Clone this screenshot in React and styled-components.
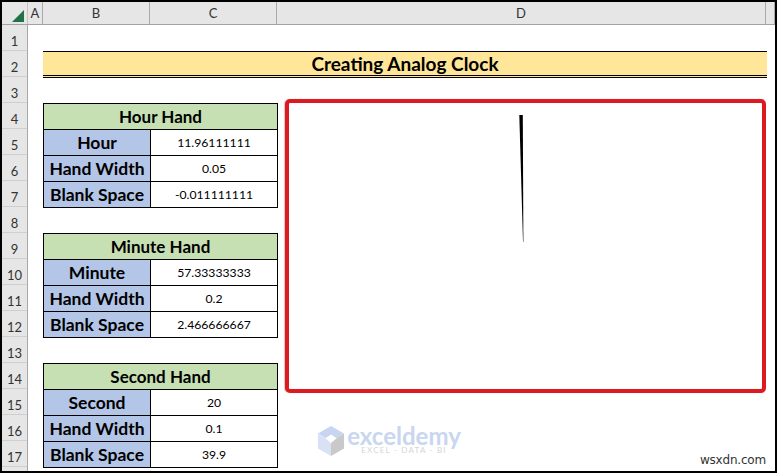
import { createGlobalStyle, styled } from "styled-components";

const GlobalStyle = createGlobalStyle`
    html, body {
        margin: 0;
        padding: 0;
        background: #fff;
    }
`;

const Frame = styled.div`
    box-sizing: border-box;
    width: 777px;
    height: 473px;
    border: 2px solid #000;
    overflow: hidden;
    background: #fff;
    font-family: Lato, "Liberation Sans", sans-serif;
    color: #000;
`;

const ColumnBar = styled.div`
    display: flex;
    height: 23px;
    background: #e6e6e6;
    border-bottom: 1px solid #a3a3a3;
    box-sizing: border-box;
`;

const Corner = styled.div`
    box-sizing: border-box;
    width: 26px;
    padding: 5px 3px 0 0;
    border-right: 1px solid #c4c4c4;
    display: flex;
    justify-content: flex-end;
    align-items: center;
`;

const ColumnLabel = styled.div`
    box-sizing: border-box;
    width: ${(p) => p.$width}px;
    border-right: 1px solid #ababab;
    text-align: center;
    font-size: 13px;
    line-height: 22px;
    color: #333;
`;

const SheetBody = styled.div`
    display: flex;
    height: 446px;
`;

const RowBar = styled.div`
    box-sizing: border-box;
    width: 26px;
    background: #e6e6e6;
    border-right: 1px solid #a8a8a8;
    flex: none;
`;

const RowLabel = styled.div`
    box-sizing: border-box;
    height: 26px;
    padding-top: 6px;
    border-bottom: 1px solid #cfcfcf;
    text-align: center;
    font-size: 13px;
    line-height: 20px;
    color: #333;
`;

const Canvas = styled.div`
    position: relative;
    flex: 1;
    padding: 26px 0 0 15px;
`;

const Title = styled.div`
    box-sizing: border-box;
    width: 724px;
    height: 27px;
    background: #ffe699;
    border-top: 1px solid #000;
    border-bottom: 3px double #000;
    text-align: center;
    font-size: 19px;
    font-weight: 700;
    line-height: 24px;
`;

const Tables = styled.div`
    display: flex;
    flex-direction: column;
    gap: 25px;
    margin-top: 25px;
`;

const Table = styled.table`
    border-collapse: collapse;
    table-layout: fixed;
    width: 235px;
    font-size: 12.2px;

    td, th {
        border: 1px solid #000;
        height: 25px;
        padding: 0;
        text-align: center;
    }
`;

const LabelColumn = styled.col`
    width: 107px;
`;

const Heading = styled.th`
    background: #c6e0b4;
    font-size: 17px;
    font-weight: 700;
`;

const Label = styled.td`
    background: #b4c6e7;
    font-size: 17.5px;
    font-weight: 700;
`;

const Chart = styled.div`
    position: absolute;
    left: 257px;
    top: 74px;
    box-sizing: border-box;
    width: 481px;
    height: 294px;
    border: 4px solid #dd1a20;
    border-radius: 5px;
    box-shadow: -1px 0 1px #d8c4c4;
    background: #fff;
`;

const ClockHand = styled.svg`
    position: absolute;
    left: 230px;
    top: 12px;
`;

const Watermark = styled.div`
    position: absolute;
    left: 289px;
    top: 401px;
    display: flex;
    gap: 4px;
`;

const BrandText = styled.div`
    display: flex;
    flex-direction: column;
    align-items: center;
    width: 110px;
    margin-top: -1px;
`;

const BrandName = styled.div`
    font-size: 24px;
    font-weight: 700;
    line-height: 21px;
    color: #c9d6f0;
`;

const BrandTag = styled.div`
    font-size: 8px;
    letter-spacing: 1.2px;
    line-height: 9px;
    color: #d5d5d5;
`;

const Credit = styled.div`
    position: absolute;
    right: 9px;
    bottom: 4px;
    font-family: "DejaVu Sans", sans-serif;
    font-size: 12px;
    letter-spacing: -0.2px;
    color: #333;
`;

const columns = [
    ["A", 15],
    ["B", 107],
    ["C", 127],
    ["D", 489],
    ["", 9],
];

const tables = [
    {
        title: "Hour Hand",
        rows: [
            ["Hour", "11.96111111"],
            ["Hand Width", "0.05"],
            ["Blank Space", "-0.011111111"],
        ],
    },
    {
        title: "Minute Hand",
        rows: [
            ["Minute", "57.33333333"],
            ["Hand Width", "0.2"],
            ["Blank Space", "2.466666667"],
        ],
    },
    {
        title: "Second Hand",
        rows: [
            ["Second", "20"],
            ["Hand Width", "0.1"],
            ["Blank Space", "39.9"],
        ],
    },
];

const rowNumbers = Array.from({ length: 17 }, (_, i) => i + 1);

function App() {
    return (
        <Frame>
            <GlobalStyle />
            <ColumnBar>
                <Corner>
                    <svg width="12" height="12" viewBox="0 0 12 12">
                        <polygon points="0,12 12,12 12,0" fill="#217346" />
                    </svg>
                </Corner>
                {columns.map(([name, width]) => (
                    <ColumnLabel key={width} $width={width}>{name}</ColumnLabel>
                ))}
            </ColumnBar>
            <SheetBody>
                <RowBar>
                    {rowNumbers.map((n) => (
                        <RowLabel key={n}>{n}</RowLabel>
                    ))}
                </RowBar>
                <Canvas>
                    <Title>Creating Analog Clock</Title>
                    <Tables>
                        {tables.map((table) => (
                            <Table key={table.title}>
                                <colgroup>
                                    <LabelColumn />
                                    <col />
                                </colgroup>
                                <thead>
                                    <tr>
                                        <Heading colSpan={2}>{table.title}</Heading>
                                    </tr>
                                </thead>
                                <tbody>
                                    {table.rows.map(([label, value]) => (
                                        <tr key={label}>
                                            <Label>{label}</Label>
                                            <td>{value}</td>
                                        </tr>
                                    ))}
                                </tbody>
                            </Table>
                        ))}
                    </Tables>
                    <Chart>
                        <ClockHand width="8" height="130" viewBox="0 0 8 130">
                            <polygon points="0.3,0 3.8,0 4.4,127 4,127" fill="#000" />
                        </ClockHand>
                    </Chart>
                    <Watermark>
                        <svg width="28" height="31" viewBox="0 0 30 33">
                            <polygon points="15,0 29,8 15,16 1,8" fill="#c8d5f0" />
                            <polygon points="1,8 15,16 15,32 1,24" fill="#d9e2f5" />
                            <polygon points="29,8 15,16 15,32 29,24" fill="#c9c9c9" />
                            <polygon points="15,9 21,13 15,18 9,13" fill="#fff" />
                        </svg>
                        <BrandText>
                            <BrandName>exceldemy</BrandName>
                            <BrandTag>EXCEL - DATA - BI</BrandTag>
                        </BrandText>
                    </Watermark>
                    <Credit>wsxdn.com</Credit>
                </Canvas>
            </SheetBody>
        </Frame>
    );
}

export default App;
